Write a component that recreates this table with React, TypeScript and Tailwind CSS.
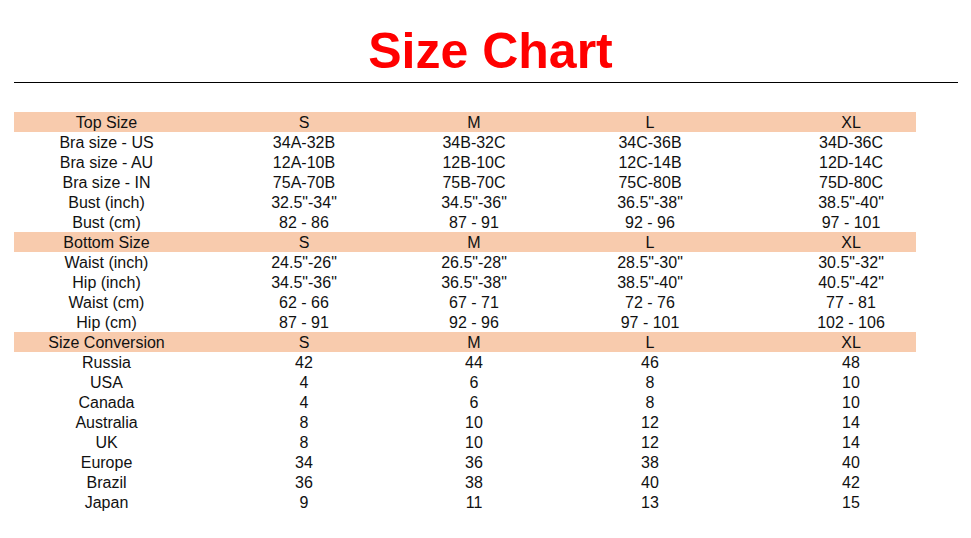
import React from 'react';

type Row = { label: string; values: string[]; header?: boolean };

const rows: Row[] = [
  { label: 'Top Size', values: ['S', 'M', 'L', 'XL'], header: true },
  { label: 'Bra size - US', values: ['34A-32B', '34B-32C', '34C-36B', '34D-36C'] },
  { label: 'Bra size - AU', values: ['12A-10B', '12B-10C', '12C-14B', '12D-14C'] },
  { label: 'Bra size - IN', values: ['75A-70B', '75B-70C', '75C-80B', '75D-80C'] },
  { label: 'Bust (inch)', values: ['32.5"-34"', '34.5"-36"', '36.5"-38"', '38.5"-40"'] },
  { label: 'Bust (cm)', values: ['82 - 86', '87 - 91', '92 - 96', '97 - 101'] },
  { label: 'Bottom Size', values: ['S', 'M', 'L', 'XL'], header: true },
  { label: 'Waist (inch)', values: ['24.5"-26"', '26.5"-28"', '28.5"-30"', '30.5"-32"'] },
  { label: 'Hip (inch)', values: ['34.5"-36"', '36.5"-38"', '38.5"-40"', '40.5"-42"'] },
  { label: 'Waist (cm)', values: ['62 - 66', '67 - 71', '72 - 76', '77 - 81'] },
  { label: 'Hip (cm)', values: ['87 - 91', '92 - 96', '97 - 101', '102 - 106'] },
  { label: 'Size Conversion', values: ['S', 'M', 'L', 'XL'], header: true },
  { label: 'Russia', values: ['42', '44', '46', '48'] },
  { label: 'USA', values: ['4', '6', '8', '10'] },
  { label: 'Canada', values: ['4', '6', '8', '10'] },
  { label: 'Australia', values: ['8', '10', '12', '14'] },
  { label: 'UK', values: ['8', '10', '12', '14'] },
  { label: 'Europe', values: ['34', '36', '38', '40'] },
  { label: 'Brazil', values: ['36', '38', '40', '42'] },
  { label: 'Japan', values: ['9', '11', '13', '15'] },
];

export default function App() {
  return (
    <div className="w-[971px] h-[538px] bg-white overflow-hidden font-['Liberation_Sans',Arial,sans-serif] text-[#111]">
      {/* Title */}
      <div className="pt-[26px] pl-[10px] flex justify-center">
        <h1 className="text-[50px] leading-none font-bold text-[#ff0000]">Size Chart</h1>
      </div>
      <div className="mt-[6px] ml-[14px] w-[944px] h-px bg-black" />

      {/* Table */}
      <div className="mt-[29px] ml-[14px] w-[902px] text-[16px]">
        {rows.map((row, i) => (
          <div
            key={i}
            className={`grid grid-cols-[184px_212px_128px_224px_154px] h-5 pt-px leading-[19px] text-center ${
              row.header ? 'bg-[#f8cbad]' : ''
            }`}
          >
            <div className="pl-px">{row.label}</div>
            <div>{row.values[0]}</div>
            <div>{row.values[1]}</div>
            <div>{row.values[2]}</div>
            <div className="pl-6">{row.values[3]}</div>
          </div>
        ))}
      </div>
    </div>
  );
}
